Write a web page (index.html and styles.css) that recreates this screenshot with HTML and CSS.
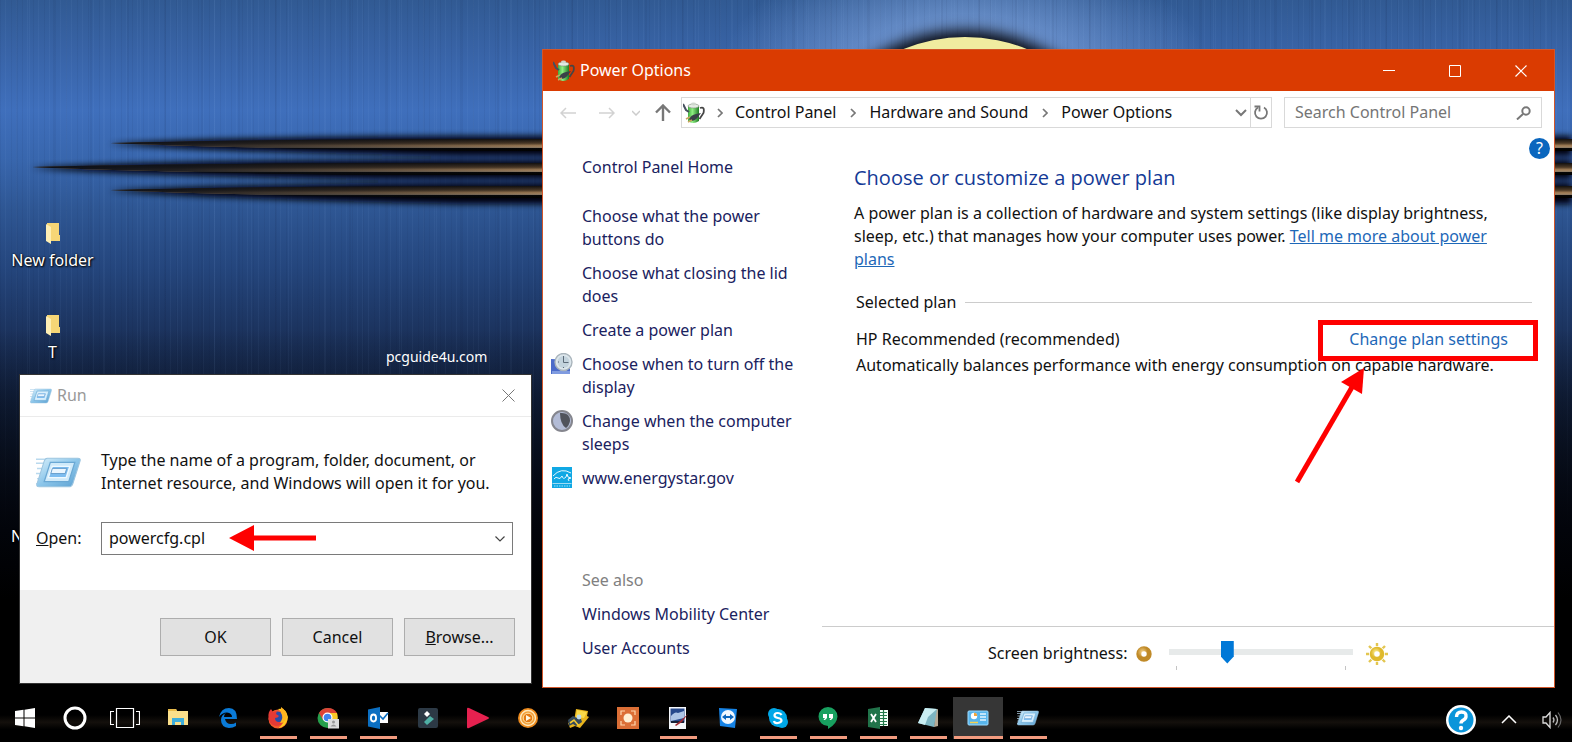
FILE: index.html
```html
<!DOCTYPE html>
<html lang="en">
<head>
<meta charset="utf-8">
<title>Power Options</title>
<link rel="stylesheet" href="styles.css">
</head>
<body>
<svg class="defs" aria-hidden="true">
  <defs>
    <linearGradient id="blueGlass" x1="0" y1="0" x2="1" y2="1"><stop offset="0" stop-color="#d9f0fb"/><stop offset=".5" stop-color="#8cc6ea"/><stop offset="1" stop-color="#5a9fd0"/></linearGradient>
    <linearGradient id="battery" x1="0" x2="1"><stop offset="0" stop-color="#3fae3c"/><stop offset=".4" stop-color="#8fef82"/><stop offset="1" stop-color="#1f7a24"/></linearGradient>
    <radialGradient id="gold" cx=".35" cy=".3"><stop offset="0" stop-color="#f5d38a"/><stop offset="1" stop-color="#c08a28"/></radialGradient>
    <radialGradient id="sunFill" cx=".4" cy=".35"><stop offset="0" stop-color="#fff3a0"/><stop offset="1" stop-color="#dfb92c"/></radialGradient>
    <linearGradient id="metal" x1="0" y1="0" x2="0" y2="1"><stop offset="0" stop-color="#12100f"/><stop offset=".35" stop-color="#4d3a26"/><stop offset=".58" stop-color="#a8835a"/><stop offset=".72" stop-color="#8d7a64"/><stop offset=".78" stop-color="#050505"/><stop offset="1" stop-color="#000"/></linearGradient>
    <linearGradient id="tipFade" gradientUnits="userSpaceOnUse" x1="20" y1="0" x2="560" y2="0"><stop offset="0" stop-color="#0c1018"/><stop offset=".3" stop-color="#0c1018" stop-opacity=".85"/><stop offset=".65" stop-color="#0c1018" stop-opacity=".45"/><stop offset="1" stop-color="#0c1018" stop-opacity="0"/></linearGradient>
    <filter id="soft" x="-5%" y="-150%" width="110%" height="400%"><feGaussianBlur stdDeviation="3"/></filter>
    <symbol id="run" viewBox="0 0 44 30">
      <path d="M0 2h12M0 6h10M1 11h8M0 16h8M1 21h6M0 26h6" stroke="#b9d9ee" stroke-width="1.4"/>
      <path d="M11 1h30q3 0 2 3l-7 22q-1 3-4 3H3q-3 0-2-3L8 4q1-3 3-3z" fill="url(#blueGlass)" stroke="#9cc5e0"/>
      <path d="M14 5h24l-6 19H8z" fill="#cfeafa" stroke="#6aa8d4" stroke-width="1.2"/>
      <path d="M16 9h17l-3.500 11H12z" fill="#7dbdf0" stroke="#eef9ff" stroke-width="1.4"/>
      <path d="M16 11h14l-1.500 5H14.500z" fill="#eaf6ff" stroke="#5b93c4" stroke-width=".8"/>
    </symbol>
    <symbol id="power" viewBox="0 0 22 22">
      <path d="M17 6q5-2 3.500 5l-4 6" fill="none" stroke="#454545" stroke-width="1.8"/>
      <path d="M5 4v15q5 4 11 0V4z" fill="url(#battery)"/>
      <ellipse cx="10.500" cy="4" rx="5.500" ry="2" fill="#e4ebe3" stroke="#7d8a7c" stroke-width=".6"/>
      <ellipse cx="10.500" cy="2" rx="2.500" ry="1.400" fill="#cfd6ce"/>
      <path d="M0 2l3 6 3 2" fill="none" stroke="#46505e" stroke-width="2"/>
      <path d="M6 17q2-4 7-5l5-1-3 4q-3 4-7 4z" fill="#3a4148"/>
      <path d="M3 17l4-2M5 20l4-2" stroke="#c9a45e" stroke-width="1.600"/>
    </symbol>
    <symbol id="folder" viewBox="0 0 14 21">
      <path d="M1 0h12v12h1v6H1z" fill="#f6d676"/><path d="M0 1l5 3v17l-5-3z" fill="#fdeeb4"/>
    </symbol>
    <symbol id="crumb" viewBox="0 0 6 10"><path d="M1 1l4 4-4 4" fill="none" stroke="#777" stroke-width="1.700"/></symbol>
  </defs>
</svg>

<main class="desktop">
  <div class="moon"></div>
  <svg class="spikes" viewBox="0 0 1572 90" preserveAspectRatio="xMinYMin slice" aria-hidden="true">
    <g filter="url(#soft)" fill="#03060d">
      <path d="M108 22Q220 15 460 14H1572V34H460Q220 30 108 22z"/>
      <path d="M30 46Q140 39 380 38H1572V57H380Q140 54 30 46z"/>
      <path d="M108 69Q220 62 460 61H1572V82H460Q220 77 108 69z"/>
    </g>
    <g fill="url(#metal)">
      <path d="M110 21Q220 18 460 17H1572V29H460Q220 26 110 21z"/>
      <path d="M32 45Q140 42 380 41H1572V53H380Q140 50 32 45z"/>
      <path d="M110 68Q220 65 460 64H1572V76H460Q220 73 110 68z"/>
    </g>
    <g fill="url(#tipFade)">
      <path d="M110 21Q220 18 460 17H560V29H460Q220 26 110 21z"/>
      <path d="M32 45Q140 42 380 41H560V53H380Q140 50 32 45z"/>
      <path d="M110 68Q220 65 460 64H560V76H460Q220 73 110 68z"/>
    </g>
  </svg>

  <div class="shortcut shortcut-new"><svg class="folder"><use href="#folder"/></svg><span>New folder</span></div>
  <div class="shortcut shortcut-t"><svg class="folder"><use href="#folder"/></svg><span>T</span></div>
  <div class="shortcut shortcut-n"><span>N</span></div>
  <p class="site">pcguide4u.com</p>

  <section class="run-window" aria-label="Run">
    <header class="run-title">
      <svg class="run-small"><use href="#run"/></svg>
      <h2>Run</h2>
      <button class="run-close" aria-label="Close"><svg width="13" height="13" viewBox="0 0 13 13"><path d="M.5.500l12 12M12.500.500l-12 12" stroke="#777"/></svg></button>
    </header>
    <div class="run-body">
      <svg class="run-large"><use href="#run"/></svg>
      <p class="run-text">Type the name of a program, folder, document, or Internet resource, and Windows will open it for you.</p>
      <label for="open"><u>O</u>pen:</label>
      <div class="combo">
        <input id="open" type="text" value="powercfg.cpl">
        <button aria-label="Show list"><svg width="10" height="6" viewBox="0 0 10 6"><path d="M.5.500L5 5 9.500.500" fill="none" stroke="#444" stroke-width="1.200"/></svg></button>
        <svg class="combo-arrow" viewBox="0 0 87 26" aria-hidden="true"><path d="M0 13L25 0v10.500h62v5H25V26z" fill="#fe0000"/></svg>
      </div>
    </div>
    <footer class="run-footer">
      <button>OK</button><button>Cancel</button><button><u>B</u>rowse...</button>
    </footer>
  </section>

  <section class="power-window" aria-label="Power Options">
    <header class="power-title">
      <svg class="power-icon"><use href="#power"/></svg>
      <h1>Power Options</h1>
      <button aria-label="Minimize"><svg viewBox="0 0 12 12"><path d="M0 5.500h12" stroke="#fff"/></svg></button>
      <button aria-label="Maximize"><svg viewBox="0 0 12 12"><path d="M.5.500h11v11H.5z" fill="none" stroke="#fff"/></svg></button>
      <button aria-label="Close"><svg viewBox="0 0 12 12"><path d="M.5.500l11 11M11.500.500l-11 11" stroke="#fff" stroke-width="1.200"/></svg></button>
    </header>
    <nav class="toolbar" aria-label="Location">
      <button class="nav-button" aria-label="Back"><svg width="16" height="12" viewBox="0 0 16 12"><path d="M16 6H1M6 1L1 6l5 5" fill="none" stroke="#d2d2d2" stroke-width="1.500"/></svg></button>
      <button class="nav-button" aria-label="Forward"><svg width="16" height="12" viewBox="0 0 16 12"><path d="M0 6h15M10 1l5 5-5 5" fill="none" stroke="#d2d2d2" stroke-width="1.500"/></svg></button>
      <button class="nav-button nav-recent" aria-label="Recent"><svg width="8" height="6" viewBox="0 0 8 6"><path d="M0 1l4 4 4-4" fill="none" stroke="#ccc" stroke-width="1.500"/></svg></button>
      <button class="nav-button nav-up" aria-label="Up"><svg width="16" height="17" viewBox="0 0 16 17"><path d="M8 17V2M1 8.500L8 1.500l7 7" fill="none" stroke="#777" stroke-width="2.400"/></svg></button>
      <div class="address">
        <svg class="power-icon"><use href="#power"/></svg>
        <svg class="crumb"><use href="#crumb"/></svg><a href="#">Control Panel</a>
        <svg class="crumb"><use href="#crumb"/></svg><a href="#">Hardware and Sound</a>
        <svg class="crumb"><use href="#crumb"/></svg><a href="#">Power Options</a>
        <button class="history" aria-label="History"><svg width="12" height="8" viewBox="0 0 12 8"><path d="M1 1l5 5 5-5" fill="none" stroke="#777" stroke-width="2"/></svg></button>
        <button class="refresh" aria-label="Refresh"><svg width="16" height="16" viewBox="0 0 16 16"><path d="M11 2.500a6 6 0 1 1-6 0" fill="none" stroke="#777" stroke-width="1.800"/><path d="M1.500 1.500h5v5" fill="none" stroke="#777" stroke-width="1.800"/></svg></button>
      </div>
      <div class="search">
        <input type="search" placeholder="Search Control Panel" aria-label="Search Control Panel">
        <svg width="15" height="14" viewBox="0 0 15 14"><circle cx="10" cy="5" r="3.700" fill="none" stroke="#777" stroke-width="2"/><path d="M7 8l-6 5.500" stroke="#777" stroke-width="2"/></svg>
      </div>
    </nav>
    <div class="content">
      <aside class="sidebar">
        <a class="home" href="#">Control Panel Home</a>
        <a href="#">Choose what the power buttons do</a>
        <a href="#">Choose what closing the lid does</a>
        <a href="#">Create a power plan</a>
        <div class="task"><svg class="task-icon" viewBox="0 0 22 22"><path d="M0 6l19 1v14H0z" fill="#4b6bc9"/><path d="M1 18h18v3H1z" fill="#7f9be0"/><circle cx="12.500" cy="9" r="8.500" fill="#dce6ec" stroke="#aab5bc" stroke-width="1.400"/><circle cx="12.500" cy="9" r="6" fill="#c3d3dd"/><path d="M12.500 3v6.500h5M12.500 14v1M7 9h1" stroke="#5c6a78" fill="none"/></svg><a href="#">Choose when to turn off the display</a></div>
        <div class="task"><svg class="task-icon" viewBox="0 0 22 22"><circle cx="11" cy="11" r="10" fill="#b3bcd6" stroke="#85868e" stroke-width="2"/><path d="M9 3q10-1 10 8-1 5-4 7Q9 14 9 3z" fill="#50535c"/></svg><a href="#">Change when the computer sleeps</a></div>
        <div class="task"><svg class="task-icon" viewBox="0 0 22 22"><path d="M1 0h20v21H1z" fill="#10a8e4"/><path d="M1.500 16.500h19" stroke="#9ddcf5"/><path d="M2 9Q10 0 20 6M3 12q2-3 4-1t4-2q1 4 4 1l1-3 1 3 3 1-3 1 1 2" fill="none" stroke="#e8f8ff"/><path d="M3 19h16" stroke="#6fcdf0" stroke-width="1.500" stroke-dasharray="1.500 1"/></svg><a href="#">www.energystar.gov</a></div>
        <h3>See also</h3>
        <a href="#">Windows Mobility Center</a>
        <a href="#">User Accounts</a>
      </aside>
      <div class="main">
        <button class="help" aria-label="Help">?</button>
        <div class="plans">
          <h2>Choose or customize a power plan</h2>
          <p class="intro">A power plan is a collection of hardware and system settings (like display brightness, sleep, etc.) that manages how your computer uses power. <a href="#">Tell me more about power plans</a></p>
          <div class="group"><h3>Selected plan</h3><hr></div>
          <div class="plan"><span>HP Recommended (recommended)</span><a href="#">Change plan settings</a></div>
          <p class="plan-note">Automatically balances performance with energy consumption on capable hardware.</p>
          <div class="highlight"></div>
          <svg class="highlight-arrow" viewBox="0 0 72 118" aria-hidden="true"><path d="M2 115L60 15" stroke="#fe0000" stroke-width="5"/><path d="M69 1L46 15l21 12z" fill="#fe0000"/></svg>
        </div>
        <div class="brightness">
          <label for="level">Screen brightness:</label>
          <svg class="dim" viewBox="0 0 16 16"><circle cx="8" cy="8" r="5.200" fill="none" stroke="url(#gold)" stroke-width="5"/></svg>
          <div class="slider"><input id="level" type="range" min="0" max="100" value="30"><div class="ticks"></div></div>
          <svg class="sun" viewBox="0 0 22 22"><path d="M11 0v22M0 11h22M3 3l16 16M19 3L3 19" stroke="#e3c650" stroke-width="2.400"/><circle cx="11" cy="11" r="8" fill="#fff"/><circle cx="11" cy="11" r="5" fill="#fff" stroke="url(#sunFill)" stroke-width="4.500"/></svg>
        </div>
      </div>
    </div>
  </section>
</main>

<footer class="taskbar">
  <button aria-label="Start"><svg viewBox="0 0 22 22"><path d="M1 4l8.500-1.200V10.500H1zM10.500 2.700L21 1v9.500H10.500zM1 11.500h8.500v7.700L1 18zM10.500 11.500H21V21l-10.500-1.700z" fill="#fff"/></svg></button>
  <button aria-label="Search"><svg class="ring" viewBox="0 0 24 24"><circle cx="12" cy="12" r="10" fill="none" stroke="#fff" stroke-width="3"/></svg></button>
  <button class="views" aria-label="Task View"><svg viewBox="0 0 30 22"><path d="M6.500 1.500h17v19h-17zM4 4.500H.5v13H4M26 4.500h3.500v13H26" fill="none" stroke="#fff" stroke-width="1.200"/></svg></button>
  <button aria-label="File Explorer"><svg viewBox="0 0 22 22"><path d="M1 2h8l1 2h11v14H1z" fill="#fbe08b"/><path d="M1 2h8l1 2H1z" fill="#e9bc4b"/><path d="M5 18v-7h12v7h-3v-3H8v3z" fill="#3faedb"/></svg></button>
  <button aria-label="Edge"><svg viewBox="0 0 22 22"><path d="M2 10Q4 1 12 1q8 0 8 11H8q1 5 6 5 3 0 5-1.500V19q-3 2-7 2-8-1-8-8 0-5 5-7-2 1-2 4h8q0-4-5-4.500Q5 5.500 2 10z" fill="#0a7bd8"/></svg></button>
  <button class="open" aria-label="Firefox"><svg viewBox="0 0 22 22"><circle cx="11" cy="12" r="9.500" fill="#f35a2a"/><path d="M11 2q8-2 10 8-1 10-10 11 7-4 6-11-1-4-6-8z" fill="#ffcb20"/><circle cx="10.500" cy="10.500" r="6" fill="#284ca8"/><path d="M1.500 10Q1 5 4 2l2 3 4-1-1 3 3 2q-1 2-4 2 0 4 4 4 3 0 4-2-1 6-7 6-6-1-7.500-7z" fill="#e43a35"/><path d="M14 0q6 4 6 10-2 6-7 6 4-6 1-10z" fill="#ffb51f"/></svg></button>
  <button class="open" aria-label="Chrome"><svg viewBox="0 0 22 22"><circle cx="10.500" cy="11" r="10" fill="#259f4c"/><path d="M2 6Q5 1 11 1q6 0 9 5H11l-5 7z" fill="#dd4336"/><path d="M20 6q3 9-6 15l-3-2 4-10-3-3z" fill="#fbc926"/><circle cx="10.500" cy="10.500" r="5" fill="#fff"/><circle cx="10.500" cy="10.500" r="3.800" fill="#3f83ef"/><path d="M11 12h11v9.500H11z" fill="#ddd"/><circle cx="16.500" cy="15" r="1.500" fill="#999"/><path d="M13.500 19.500q3-4 6 0z" fill="#999"/></svg></button>
  <button class="open" aria-label="Outlook"><svg viewBox="0 0 22 22"><path d="M11 5h10v11H11z" fill="#fff"/><path d="M12 8l4 4 5-6" fill="none" stroke="#0b6fc2" stroke-width="1.600"/><path d="M1 2.500L13 0v22L1 19.500z" fill="#0b6fc2"/><ellipse cx="6.500" cy="11" rx="2.600" ry="3.500" fill="none" stroke="#fff" stroke-width="1.800"/></svg></button>
  <button aria-label="Filmora"><svg viewBox="0 0 22 22"><rect x="1" y="1" width="20" height="20" rx="2" fill="#2c3945"/><path d="M10 4l3 3-3 3-3-3z" fill="#fff"/><path d="M13 9l4 3-7 6-3-3z" fill="#4fb0a5"/></svg></button>
  <button aria-label="Player"><svg viewBox="0 0 22 22"><path d="M0 2q0-2 2-1l19 9q2 1 0 2L2 21q-2 1-2-1z" fill="#e6214f"/></svg></button>
  <button aria-label="Media"><svg viewBox="0 0 22 22"><circle cx="11" cy="11" r="10" fill="#ee8b1d"/><circle cx="11" cy="11" r="7.500" fill="#f3a039" stroke="#ffe9bd" stroke-width="1.400"/><circle cx="11" cy="11" r="4.800" fill="#e47a12" stroke="#ffe2a8"/><path d="M9 8l5 3-5 3z" fill="#fff7e2"/></svg></button>
  <button aria-label="Utility"><svg viewBox="0 0 22 22"><path d="M9 2l12 2-1 5 2 1-9 11-5-2-5 2-2-5 6-2z" fill="#e9b51d"/><path d="M10 3l10 2-3 6-8-1z" fill="#f9d94a"/><path d="M1 13l5-4 4 2 4 1 1 3-6 4-3-2-4 2z" fill="#34495c"/><circle cx="12" cy="10" r="2.400" fill="#bcd9ea"/><path d="M3 16l4-3 5 6" stroke="#f5c92f" stroke-width="1.600" fill="none"/></svg></button>
  <button aria-label="Capture"><svg viewBox="0 0 22 22"><path d="M0 0h22v22H0z" fill="#dc6f36"/><path d="M4 8V4h4M14 4h4v4M18 14v4h-4M8 18H4v-4" fill="none" stroke="#ffd7ae" stroke-width="1.200"/><circle cx="11" cy="11" r="4.500" fill="#fff0d4"/></svg></button>
  <button class="open" aria-label="Paint"><svg viewBox="0 0 22 22"><path d="M2 0h17v22H2z" fill="#f5f8fc"/><path d="M3.500 1.500h14v14h-14z" fill="#26498c"/><path d="M4 9q4-5 7-3l6-2v7l-13 3z" fill="#adc5e6"/><path d="M4 14h13v2H4z" fill="#152238"/><path d="M8 18l5-4 8-7-6 8-6 4z" fill="#9d2932"/></svg></button>
  <button aria-label="TeamViewer"><svg viewBox="0 0 22 22"><path d="M2 1l18 1-2 19-15-2z" fill="#1683e5"/><circle cx="11" cy="10" r="7" fill="#f1f8ff"/><path d="M5 10l4-3v2h4V7l4 3-4 3v-2H9v2z" fill="#0b65bc"/></svg></button>
  <button class="open" aria-label="Skype"><svg viewBox="0 0 22 22"><circle cx="7" cy="7" r="6" fill="#00a8e8"/><circle cx="15" cy="15" r="6" fill="#00a8e8"/><circle cx="11" cy="11" r="9" fill="#00a8e8"/><path d="M14.500 8q-1-2-4-2T7.500 8.500q0 2 3.500 2.500t3.500 2.500T11 16t-4-2" fill="none" stroke="#fff" stroke-width="2.200"/></svg></button>
  <button class="open" aria-label="Hangouts"><svg viewBox="0 0 22 22"><path d="M11 0a9.500 9.500 0 0 1 9.500 9.500Q20 17 11 22v-3A9.500 9.500 0 1 1 11 0z" fill="#18a05f"/><path d="M6 7h4v4l-2 2H6.500L8 11H6zM12 7h4v4l-2 2h-1.500L14 11h-2z" fill="#fff"/></svg></button>
  <button class="open" aria-label="Excel"><svg viewBox="0 0 22 22"><path d="M12 3h9v16h-9z" fill="#f5fff8"/><path d="M13 5.500h7M13 8.500h7M13 11.500h7M13 14.500h7M13 17.500h7M16.500 3v16" stroke="#23794a" stroke-width="1.200"/><path d="M1 2l12-2v22L1 20z" fill="#21734a"/><path d="M4 7l5 8M9 7l-5 8" stroke="#fff" stroke-width="1.800"/></svg></button>
  <button class="open" aria-label="Notepad"><svg viewBox="0 0 22 22"><path d="M18 3l3-1v17l-4 1z" fill="#b6a995"/><path d="M8 1l12 1-3 18-16-4z" fill="#7db5c2"/><path d="M8 1l12 1-9 8-3 8-7-2z" fill="#c9edf2"/></svg></button>
  <button class="open active" aria-label="Control Panel"><svg viewBox="0 0 22 22"><rect x="1" y="4" width="20" height="14" rx="1" fill="#58b5ec" stroke="#9edcff"/><circle cx="7" cy="9" r="3.200" fill="#fff"/><path d="M7 9V5.800A3.200 3.200 0 0 1 10.200 9z" fill="#f3a53a"/><path d="M13 7h6M13 10h6M13 13h6" stroke="#e3f5ff" stroke-width="1.500"/><path d="M3 15.500h8" stroke="#f6d14f" stroke-width="1.500"/></svg></button>
  <button class="open" aria-label="Run"><svg viewBox="0 0 22 22"><use href="#run" x="0" y="3" width="22" height="16"/></svg></button>
  <div class="tray">
    <button class="assist" aria-label="Support"><svg viewBox="0 0 30 30"><circle cx="15" cy="15" r="15" fill="#fff"/><circle cx="15" cy="15" r="12.500" fill="#0a95da"/><path d="M10.500 12q0-5 5-5t4.500 4.500q0 2-2.500 3.500t-2.500 3.500" fill="none" stroke="#fff" stroke-width="3.400"/><circle cx="15" cy="23" r="2.200" fill="#fff"/></svg></button>
    <button aria-label="Show hidden icons"><svg class="caret" viewBox="0 0 16 9"><path d="M1 8l7-7 7 7" fill="none" stroke="#fff" stroke-width="1.500"/></svg></button>
    <button aria-label="Volume"><svg class="volume" viewBox="0 0 20 18"><path d="M1 6h3l4-4.500v15L4 12H1z" fill="none" stroke="#ddd" stroke-width="1.300"/><path d="M11 6.500q2 2.500 0 5M13.500 4q4 5 0 10" fill="none" stroke="#bbb" stroke-width="1.300"/><path d="M16 1.500q6 7.500 0 15" fill="none" stroke="#666" stroke-width="1.200"/></svg></button>
  </div>
</footer>
</body>
</html>
```
FILE: styles.css
```css
* { box-sizing: border-box; }

body {
  margin: 0;
  height: 100vh;
  overflow: hidden;
  display: flex;
  flex-direction: column;
  background: #000;
  color: #111;
  font: 16px/23px "Noto Sans", "Open Sans", sans-serif;
}

h1, h2, h3, p { margin: 0; font-size: 16px; font-weight: 400; }
a { color: inherit; text-decoration: none; }
svg { display: block; flex: none; }

button {
  padding: 0;
  border: 0;
  background: none;
  color: inherit;
  font: inherit;
  display: flex;
  align-items: center;
  justify-content: center;
}

input { font: inherit; color: inherit; border: 0; outline: 0; background: none; min-width: 0; }

.defs { position: absolute; width: 0; height: 0; }

/* Desktop */
.desktop {
  position: relative;
  flex: 1;
  overflow: hidden;
  background:
    linear-gradient(transparent 330px, #02040a 530px, #000 600px),
    repeating-linear-gradient(90deg, rgba(0, 10, 40, .05) 0 1px, transparent 1px 5px, rgba(160, 200, 255, .05) 5px 6px, transparent 6px 11px),
    repeating-linear-gradient(90deg, transparent 0 16px, rgba(0, 10, 40, .05) 16px 18px, transparent 18px 29px, rgba(160, 200, 255, .05) 29px 30px, transparent 30px 37px),
    radial-gradient(ellipse 240px 110px at 965px 60px, rgba(150, 185, 240, .8), transparent),
    linear-gradient(#315a93 0, #3863a6 50px, #3f6fbc 110px, #3866ad 160px, #2e5693 210px, #24457c 270px, #1b325c 335px, #142545 400px, #0c1628 530px);
}

.moon {
  position: absolute;
  left: 799px;
  top: 37px;
  width: 332px;
  height: 332px;
  border-radius: 50%;
  background: #f0eca0;
  box-shadow: 0 0 14px 7px #0a0d16;
}

.spikes { position: absolute; left: 0; top: 122px; width: 100%; height: 90px; }

.shortcut {
  position: absolute;
  left: 0;
  width: 105px;
  display: flex;
  flex-direction: column;
  align-items: center;
  gap: 5px;
  color: #fff;
  text-shadow: 1px 1px 2px #000, 0 0 2px #000;
}
.shortcut-new { top: 223px; }
.shortcut-t { top: 315px; }
.shortcut-n { top: 525px; left: 11px; align-items: flex-start; }
.folder { width: 14px; height: 21px; }

.site { position: absolute; left: 386px; top: 345px; color: #fff; font-size: 14px; }

/* Run dialog */
.run-window {
  position: absolute;
  left: 19px;
  top: 374px;
  width: 513px;
  border: 1px solid #333;
  background: #fff;
}
.run-title {
  display: flex;
  align-items: center;
  gap: 5px;
  height: 42px;
  padding: 0 16px 0 10px;
  border-bottom: 1px solid #ebebeb;
  color: #999;
}
.run-small { width: 22px; height: 16px; }
.run-close { margin-left: auto; }
.run-body {
  display: grid;
  grid-template-columns: 65px 1fr;
  row-gap: 27px;
  align-items: center;
  padding: 32px 18px 35px 16px;
}
.run-large { width: 45px; height: 31px; }
.combo {
  position: relative;
  display: flex;
  height: 33px;
  padding: 0 7px;
  border: 1px solid #7a7a7a;
}
.combo input { flex: 1; padding: 0; }
.combo-arrow { position: absolute; left: 127px; top: 2px; width: 87px; height: 26px; }
.run-footer {
  display: flex;
  justify-content: flex-end;
  gap: 11px;
  padding: 28px 16px 27px;
  background: #f0f0f0;
}
.run-footer button {
  width: 111px;
  height: 38px;
  border: 1px solid #adadad;
  background: #e1e1e1;
  white-space: pre;
}

/* Power Options window */
.power-window {
  position: absolute;
  left: 542px;
  right: 17px;
  top: 49px;
  bottom: 9px;
  display: flex;
  flex-direction: column;
  border: 1px solid #d2562a;
  background: #fff;
}
.power-title {
  display: flex;
  align-items: center;
  height: 41px;
  padding-left: 10px;
  background: #da3b01;
  color: #fff;
}
.power-title h1 { flex: 1; padding-left: 5px; }
.power-title button { width: 66px; height: 41px; }
.power-title button svg { width: 12px; height: 12px; }
.power-icon { width: 22px; height: 22px; }

.toolbar {
  display: flex;
  align-items: center;
  padding: 6px 12px 0 17px;
}
.nav-button { width: 16px; margin-right: 23px; }
.nav-recent { width: 8px; margin: 0 15px 0 -6px; }
.nav-up { margin-right: 10px; }
.address {
  flex: 1;
  display: flex;
  align-items: center;
  height: 31px;
  padding-left: 1px;
  border: 1px solid #d9d9d9;
}
.address a { white-space: nowrap; }
.crumb { width: 6px; height: 10px; margin: 0 12px; }
a + .crumb { margin: 0 13px 0 14px; }
.history { margin-left: auto; width: 19px; }
.refresh { width: 21px; height: 29px; border-left: 1px solid #d9d9d9; }
.search {
  flex: none;
  width: 258px;
  display: flex;
  align-items: center;
  height: 31px;
  margin-left: 12px;
  padding: 0 10px;
  border: 1px solid #d9d9d9;
}
.search input { flex: 1; width: 0; padding: 0; }
.search input::placeholder { color: #757575; opacity: 1; }

.content { flex: 1; display: flex; min-height: 0; }
.sidebar {
  flex: 0 0 279px;
  display: flex;
  flex-direction: column;
  gap: 11px;
  padding: 28px 14px 27px 39px;
  color: #1a2260;
}
.home { margin-bottom: 15px; }
.task { display: flex; gap: 9px; margin-left: -31px; }
.task-icon { width: 22px; height: 22px; }
.sidebar h3 { margin-top: auto; color: #808080; }

.main { position: relative; flex: 1; display: flex; flex-direction: column; }
.help {
  position: absolute;
  right: 4px;
  top: 10px;
  width: 21px;
  height: 21px;
  border-radius: 50%;
  background: #0a66be;
  color: #fff;
}
.plans { position: relative; flex: 1; padding: 35px 22px 0 32px; }
.plans h2 { margin-bottom: 9px; color: #143a96; font-family: "Open Sans", sans-serif; font-size: 20px; line-height: 30px; }
.intro { padding-right: 20px; }
.intro a, .plan a { color: #1e68b8; }
.intro a { text-decoration: underline; }
.group { display: flex; align-items: center; gap: 9px; margin: 20px 0 14px 2px; }
.group hr { flex: 1; margin: 0; border: 0; border-top: 1px solid #ccc; }
.plan { display: flex; justify-content: space-between; padding: 0 24px 0 2px; }
.plan-note { margin: 3px 0 0 2px; white-space: nowrap; }
.highlight {
  position: absolute;
  right: 16px;
  top: 192px;
  width: 220px;
  height: 41px;
  border: 5px solid #fe0000;
}
.highlight-arrow { position: absolute; right: 187px; top: 239px; width: 72px; height: 118px; }

.brightness {
  display: flex;
  align-items: center;
  height: 61px;
  padding: 0 0 7px 166px;
  border-top: 1px solid #ccc;
}
.dim { width: 16px; height: 16px; margin: 0 17px 0 9px; }
.sun { width: 22px; height: 22px; margin-left: 13px; }
.slider { width: 184px; padding-top: 3px; }
.slider input {
  display: block;
  width: 100%;
  height: 23px;
  margin: 0;
  appearance: none;
  background: linear-gradient(#e7eaea, #e7eaea) center / 100% 6px no-repeat;
}
.slider input::-webkit-slider-thumb {
  appearance: none;
  width: 13px;
  height: 23px;
  background: #0078d7;
  clip-path: polygon(0 0, 100% 0, 100% 70%, 50% 100%, 0 70%);
}
.ticks { height: 4px; margin: 2px 7px 0; border: solid #c4c4c4; border-width: 0 1px; }

/* Taskbar */
.taskbar {
  display: flex;
  height: 45px;
  background: linear-gradient(#000 40%, #14100c 56%, #000 72%);
}
.taskbar > button { width: 50px; height: 42px; }
.taskbar svg { width: 22px; height: 22px; }
.taskbar .ring { width: 24px; height: 24px; }
.taskbar .views { margin-right: 3px; }
.taskbar .views svg { width: 30px; }
.taskbar .open { background: linear-gradient(#f29b7f, #f29b7f) bottom / 37px 3px no-repeat; }
.taskbar .active { background: linear-gradient(#f29b7f, #f29b7f) bottom / 49px 3px no-repeat, #363636; }
.tray { display: flex; align-items: center; gap: 25px; margin-left: auto; padding-right: 10px; }
.taskbar .assist svg { width: 30px; height: 30px; }
.taskbar .caret { width: 16px; height: 9px; }
.taskbar .volume { width: 20px; height: 18px; }
```
